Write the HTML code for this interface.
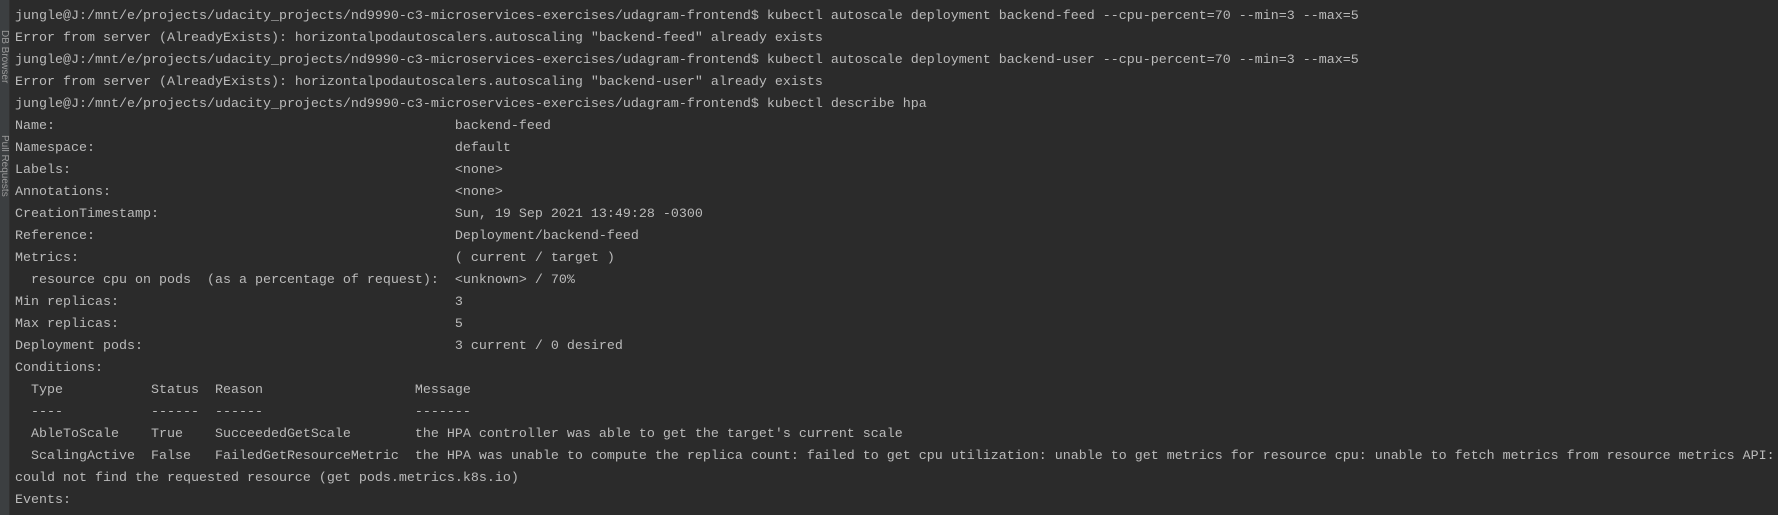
<!DOCTYPE html>
<html><head><meta charset="utf-8"><style>
html,body{margin:0;padding:0;width:1778px;height:515px;overflow:hidden;background:#2b2b2b;}
.side{position:absolute;left:0;top:0;width:9px;height:515px;background:#3c3f41;border-right:1px solid #323232;overflow:hidden;}
.vt{position:absolute;left:-1px;transform-origin:0 0;transform:rotate(90deg);font:10px "Liberation Sans",sans-serif;color:#9a9a9a;white-space:nowrap;}
pre{position:absolute;left:15px;top:6px;margin:0;font-family:"Liberation Mono",monospace;font-size:13.33px;line-height:22px;color:#bbbbbb;white-space:pre;}
</style></head><body>
<div class="side">
<div class="vt" style="top:30px;left:10px">DB Browser</div>
<div class="vt" style="top:135px;left:10px">Pull Requests</div>
</div>
<pre>jungle@J:/mnt/e/projects/udacity_projects/nd9990-c3-microservices-exercises/udagram-frontend$ kubectl autoscale deployment backend-feed --cpu-percent=70 --min=3 --max=5
Error from server (AlreadyExists): horizontalpodautoscalers.autoscaling "backend-feed" already exists
jungle@J:/mnt/e/projects/udacity_projects/nd9990-c3-microservices-exercises/udagram-frontend$ kubectl autoscale deployment backend-user --cpu-percent=70 --min=3 --max=5
Error from server (AlreadyExists): horizontalpodautoscalers.autoscaling "backend-user" already exists
jungle@J:/mnt/e/projects/udacity_projects/nd9990-c3-microservices-exercises/udagram-frontend$ kubectl describe hpa
Name:                                                  backend-feed
Namespace:                                             default
Labels:                                                &lt;none&gt;
Annotations:                                           &lt;none&gt;
CreationTimestamp:                                     Sun, 19 Sep 2021 13:49:28 -0300
Reference:                                             Deployment/backend-feed
Metrics:                                               ( current / target )
  resource cpu on pods  (as a percentage of request):  &lt;unknown&gt; / 70%
Min replicas:                                          3
Max replicas:                                          5
Deployment pods:                                       3 current / 0 desired
Conditions:
  Type           Status  Reason                   Message
  ----           ------  ------                   -------
  AbleToScale    True    SucceededGetScale        the HPA controller was able to get the target's current scale
  ScalingActive  False   FailedGetResourceMetric  the HPA was unable to compute the replica count: failed to get cpu utilization: unable to get metrics for resource cpu: unable to fetch metrics from resource metrics API:
could not find the requested resource (get pods.metrics.k8s.io)
Events:</pre>
</body></html>
